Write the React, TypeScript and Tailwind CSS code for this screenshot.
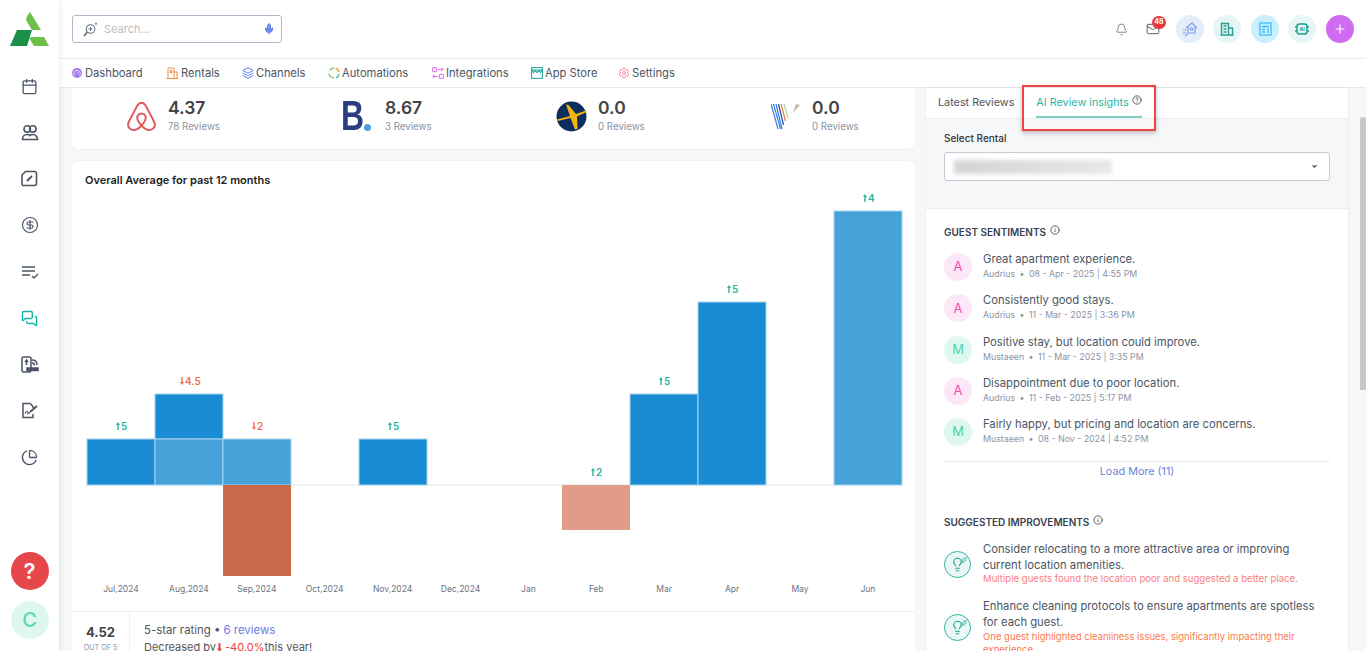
import {
  Bell,
  Calendar,
  CircleDollarSign,
  Info,
  Layers,
  Lightbulb,
  Mail,
  MessagesSquare,
  Mic,
  PieChart,
  Plus,
  Settings,
  CircleHelp,
  ChevronDown,
  Gauge,
  Sparkles,
} from "lucide-react";
import { FaAirbnb } from "react-icons/fa";

const ratings = [
  { score: "4.37", label: "78 Reviews", logo: "airbnb" },
  { score: "8.67", label: "3 Reviews", logo: "booking" },
  { score: "0.0", label: "0 Reviews", logo: "expedia" },
  { score: "0.0", label: "0 Reviews", logo: "vrbo" },
];

const sentiments = [
  { initial: "A", title: "Great apartment experience.", who: "Audrius", when: "08 - Apr - 2025 | 4:55 PM" },
  { initial: "A", title: "Consistently good stays.", who: "Audrius", when: "11 - Mar - 2025 | 3:36 PM" },
  { initial: "M", title: "Positive stay, but location could improve.", who: "Mustaeen", when: "11 - Mar - 2025 | 3:35 PM" },
  { initial: "A", title: "Disappointment due to poor location.", who: "Audrius", when: "11 - Feb - 2025 | 5:17 PM" },
  { initial: "M", title: "Fairly happy, but pricing and location are concerns.", who: "Mustaeen", when: "08 - Nov - 2024 | 4:52 PM" },
];

const months = ["Jul,2024", "Aug,2024", "Sep,2024", "Oct,2024", "Nov,2024", "Dec,2024", "Jan", "Feb", "Mar", "Apr", "May", "Jun"];

// bar coordinates are relative to the chart svg (card left = 72, svg top = 190)
const bars = [
  { x: 15, y: 249, h: 46, fill: "#198cd3" },
  { x: 83, y: 204, h: 45, fill: "#198cd3" },
  { x: 83, y: 249, h: 46, fill: "#46a3d9" },
  { x: 151, y: 249, h: 46, fill: "#46a3d9" },
  { x: 151, y: 295, h: 91, fill: "#c96a4b" },
  { x: 287, y: 249, h: 46, fill: "#198cd3" },
  { x: 490, y: 295, h: 45, fill: "#e19c87" },
  { x: 558, y: 204, h: 91, fill: "#198cd3" },
  { x: 626, y: 112, h: 183, fill: "#198cd3" },
  { x: 762, y: 21, h: 274, fill: "#46a3d9" },
];

const barLabels = [
  { x: 49, y: 240, text: "5", up: true },
  { x: 117, y: 195, text: "4.5", up: false },
  { x: 185, y: 240, text: "2", up: false },
  { x: 321, y: 240, text: "5", up: true },
  { x: 524, y: 286, text: "2", up: true },
  { x: 592, y: 195, text: "5", up: true },
  { x: 660, y: 103, text: "5", up: true },
  { x: 796, y: 12, text: "4", up: true },
];

const Logo = () => (
  <svg width="40" height="36" viewBox="0 0 40 36">
    <path d="M17 4 L20 0 L31 18 L22 18 L16 8 Z" fill="#6cc04a" />
    <path d="M0 34 L7 18 L22 18 L17 34 Z" fill="#1a8f48" />
    <path d="M19 26 L22 25 L34 25 L39 34 L24 34 Z" fill="#6cc04a" />
  </svg>
);

const SearchAiIcon = () => (
  <svg width="15" height="15" viewBox="0 0 15 15" fill="none" stroke="#6b7280" strokeWidth="1.100">
    <circle cx="7.500" cy="7" r="4.300" />
    <path d="M7.500 5v4M5.500 7h4" />
    <path d="M4.300 10.200L1 14" strokeWidth="1.800" />
    <path d="M13 0.500v2.500M11.800 1.700h2.400" strokeWidth="0.800" />
  </svg>
);

const PeopleIcon = () => (
  <svg width="18" height="18" viewBox="0 0 18 18" fill="none" stroke="#4b5563" strokeWidth="1.600">
    <circle cx="6.200" cy="5" r="3.200" />
    <circle cx="11.800" cy="5" r="3.200" />
    <path d="M1.500 15.500c0-3 2-5 4.500-5s3 1 3 1 .8-1 3-1 4.500 2 4.500 5z" />
  </svg>
);

const NoteIcon = () => (
  <svg width="17" height="17" viewBox="0 0 17 17" fill="none" stroke="#4b5563" strokeWidth="1.600">
    <path d="M4.500 1.500h9a2 2 0 0 1 2 2v10a2 2 0 0 1-2 2h-11a1.500 1.500 0 0 1-1.500-1.500V5z" />
    <path d="M6 11l5-5" strokeWidth="2" />
  </svg>
);

const TasksIcon = () => (
  <svg width="18" height="14" viewBox="0 0 18 14" fill="none" stroke="#4b5563" strokeWidth="1.600">
    <path d="M1 2h13M1 6h13M1 10h8" />
    <path d="M11 11l2 2 4-4" strokeWidth="1.300" />
  </svg>
);

const DeviceIcon = () => (
  <svg width="18" height="17" viewBox="0 0 18 17" fill="none" stroke="#4b5563" strokeWidth="1.500">
    <rect x="1" y="1" width="9" height="15" rx="1.500" />
    <path d="M5.500 4v5M4 6l1.500-2L7 6" />
    <path d="M6 12h11v2.500H6z" fill="#4b5563" />
    <path d="M11 4c3 0 5 2 5 5M11 7c1.500 0 2.500 1 2.500 2.500" />
  </svg>
);

const SignIcon = () => (
  <svg width="18" height="17" viewBox="0 0 18 17" fill="none" stroke="#4b5563" strokeWidth="1.500">
    <path d="M12 12v3.500H2V1.500h7l3 3v1.500" />
    <path d="M4 11.500c1.500-3 2.500-3 3 0 1-1 1.500-1 2 0" strokeWidth="1.200" />
    <path d="M9 10l7-6" strokeWidth="2" />
  </svg>
);

const RentalsIcon = () => (
  <svg width="13" height="12" viewBox="0 0 13 12" fill="none" stroke="#f08a4b" strokeWidth="1">
    <path d="M2 11V1h6v10M8 5h3v6M0.500 11.500h12" />
    <path d="M4 3.500h2v2H4z" />
  </svg>
);

const AutomationIcon = () => (
  <svg width="12" height="12" viewBox="0 0 12 12" fill="none" strokeWidth="1.500">
    <path d="M2 3.500A5 5 0 0 1 6 1" stroke="#7cc36a" />
    <path d="M7.500 1.200A5 5 0 0 1 11 5" stroke="#e5a84b" />
    <path d="M11 7a5 5 0 0 1-3 3.800" stroke="#59b8a5" />
    <path d="M6 11a5 5 0 0 1-5-4.500" stroke="#8fc96d" />
  </svg>
);

const IntegrationIcon = () => (
  <svg width="12" height="12" viewBox="0 0 12 12" fill="none" stroke="#e879f9" strokeWidth="1.100">
    <rect x="0.600" y="0.600" width="4" height="4" rx="1" />
    <rect x="7.400" y="7.400" width="4" height="4" rx="1" />
    <path d="M6 2.500h5M9.500 1l1.500 1.500L9.500 4M6 9.500H1M2.500 8L1 9.500 2.500 11" />
  </svg>
);

const StoreIcon = () => (
  <svg width="12" height="12" viewBox="0 0 12 12" fill="none" stroke="#2aa9a0" strokeWidth="1.100">
    <rect x="0.600" y="0.600" width="10.800" height="10.800" />
    <path d="M0.600 3h10.800M1 3l1.500 2.500L4 3.500l2 2 2-2 1.500 2L11 3" />
  </svg>
);

const HomeScanIcon = () => (
  <svg width="16" height="16" viewBox="0 0 16 16" fill="none" stroke="#7f9ce8" strokeWidth="1.100">
    <path d="M4 7l6-5 5 5M6 6v6h7V6" />
    <circle cx="9.500" cy="8" r="1.300" />
    <path d="M1 9h3M1 12h3M3 15l3-2" />
  </svg>
);

const BuildingIcon = () => (
  <svg width="14" height="14" viewBox="0 0 14 14" fill="none" stroke="#2a9d8f" strokeWidth="1.400">
    <path d="M1.500 13V1.500h7V13M8.500 6h4V13M0.500 13h13" />
    <path d="M3.500 4h3M3.500 7h3M3.500 10h3" />
  </svg>
);

const CalcIcon = () => (
  <svg width="13" height="14" viewBox="0 0 13 14" fill="none" stroke="#38bdf8" strokeWidth="1.300">
    <rect x="1" y="1" width="11" height="12" />
    <path d="M3 4.500h7M3 7.500h3M3 10h3M8 7.500h2M8 10h2" />
  </svg>
);

const ChipIcon = () => (
  <svg width="16" height="14" viewBox="0 0 16 14" fill="none" stroke="#14a085" strokeWidth="1.400">
    <rect x="3" y="2" width="10" height="10" rx="2.500" />
    <path d="M1 5h2M1 9h2M13 5h2M13 9h2" />
    <text x="8" y="9" textAnchor="middle" fontSize="5" fill="#14a085" stroke="none" fontFamily="Inter, sans-serif" fontWeight="700">
      AI
    </text>
  </svg>
);

const ExpediaLogo = () => (
  <svg width="31" height="31" viewBox="0 0 31 31">
    <circle cx="15.500" cy="15.500" r="15" fill="#0e2f5e" />
    <path d="M1 18.500 L14 15 L10 3.500 L12.500 4 L20 13 L30 9.500 L30.500 11 L21 15.500 L21.500 28 L19 28.500 L14.500 17 L1.500 20 Z" fill="#f5b50f" />
  </svg>
);

const VrboLogo = () => (
  <svg width="30" height="27" viewBox="0 0 30 27" fill="none" strokeWidth="1.200">
    <path d="M0 1l7 25M2.500 1l7 25M5 1l6 25" stroke="#3b7fdc" />
    <path d="M7.500 1l5 21" stroke="#2450a8" />
    <path d="M10 1l4.500 17" stroke="#ec7a45" />
    <path d="M13 1l4 14" stroke="#a9d6a5" />
    <path d="M22 10l3-9 4 1z" fill="#c9b7a5" stroke="none" />
  </svg>
);

const BookingLogo = () => (
  <span className="flex h-[32px] items-end">
    <span className="block w-[23px] origin-left scale-x-[0.76] font-['Liberation_Sans',sans-serif] text-[42px] font-bold leading-[32px] text-[#2a3d80]">B</span>
    <span className="mb-[1px] size-[7px] rounded-full bg-[#4a9fe0]" />
  </span>
);

const RatingLogo = ({ name }: { name: string }) => {
  if (name === "airbnb") return <FaAirbnb preserveAspectRatio="none" className="h-[33px] w-[31px] text-[#e2575c]" />;
  if (name === "booking") return <BookingLogo />;
  if (name === "expedia") return <ExpediaLogo />;
  return <VrboLogo />;
};

const sideIcons = [
  <Calendar key="a" className="size-[17px] text-gray-600" strokeWidth={1.8} />,
  <PeopleIcon key="b" />,
  <NoteIcon key="c" />,
  <CircleDollarSign key="d" className="size-[18px] text-gray-600" strokeWidth={1.6} />,
  <TasksIcon key="e" />,
  <MessagesSquare key="f" className="size-[17px] text-[#14b8a6]" strokeWidth={2} />,
  <DeviceIcon key="g" />,
  <SignIcon key="h" />,
  <PieChart key="i" className="size-[17px] text-gray-600" strokeWidth={1.8} />,
];

const navItems = [
  { label: "Dashboard", w: "w-[94px]", icon: <span className="mr-[1px] flex size-[10px] items-center justify-center rounded-full bg-[#a27bf0]"><Gauge className="size-[8px] text-white" /></span> },
  { label: "Rentals", w: "w-[76px]", icon: <RentalsIcon /> },
  { label: "Channels", w: "w-[86px]", icon: <Layers className="size-[12px] text-[#5b7ff0]" /> },
  { label: "Automations", w: "w-[104px]", icon: <AutomationIcon /> },
  { label: "Integrations", w: "w-[99px]", icon: <IntegrationIcon /> },
  { label: "App Store", w: "w-[87px]", icon: <StoreIcon /> },
  { label: "Settings", w: "w-[70px]", icon: <Settings className="size-[12px] text-[#f58aa0]" /> },
];

const SuggestionIcon = ({ className = "" }: { className?: string }) => (
  <span className={`relative flex size-[27px] shrink-0 items-center justify-center rounded-full border-[1.5px] border-[#2fb5a0] bg-[#e9f8f6] ${className}`}>
    <Lightbulb className="size-[15px] text-[#22a191]" strokeWidth={1.8} />
    <Sparkles className="absolute right-[3px] top-[5px] size-[6px] text-[#22a191]" />
  </span>
);

const DownArrow = () => (
  <svg width="5" height="9" viewBox="0 0 5 9" className="mx-[1px] inline-block align-[-1px]">
    <path d="M1.500 0h2v5.500H5L2.500 9 0 5.500h1.500z" fill="#ef4444" />
  </svg>
);

export default function App() {
  return (
    <div className="flex h-[651px] w-[1366px] overflow-hidden bg-[#f6f7f9] font-['Inter',sans-serif] text-[#4b5563]">
      <aside className="z-10 flex w-[59px] shrink-0 flex-col items-center bg-white shadow-[1px_0_6px_rgba(0,0,0,0.08)]">
        <div className="pt-[12px]">
          <Logo />
        </div>
        <div className="mt-[15px] flex flex-col">
          {sideIcons.map((icon, i) => (
            <div key={i} className="flex h-[46.400px] items-center justify-center">
              {icon}
            </div>
          ))}
        </div>
        <div className="mt-auto flex flex-col gap-[11px] pb-[12px]">
          <div className="flex size-[38px] items-center justify-center rounded-full bg-[#e5474b] text-[22px] font-semibold text-white">?</div>
          <div className="flex size-[38px] items-center justify-center rounded-full bg-[#dff8ef] text-[20px] font-medium text-[#5dd9b0]">C</div>
        </div>
      </aside>

      <div className="flex min-w-0 flex-1 flex-col">
        <header className="flex h-[59px] shrink-0 items-center justify-between border-b border-[#e8e9ec] bg-white pl-[13px] pr-[12px]">
          <div className="flex h-[28px] w-[210px] items-center rounded-[3px] border border-[#b4b7cc] pl-[10px] pr-[6px]">
            <SearchAiIcon />
            <span className="ml-[6px] text-[11px] text-[#bdbdbd]">Search...</span>
            <Mic className="ml-auto size-[12px] fill-[#7a95e8] text-[#5b7ff0]" />
          </div>
          <div className="flex items-center">
            <Bell className="size-[13px] text-gray-500" strokeWidth={1.6} />
            <div className="relative ml-[18px]">
              <Mail className="size-[14px] text-gray-600" strokeWidth={1.6} />
              <span className="absolute -right-[6px] -top-[6px] flex h-[13px] w-[14px] items-center justify-center rounded-full bg-[#e5393f] text-[7px] font-bold text-white">48</span>
            </div>
            <span className="ml-[16px] flex size-[28px] items-center justify-center rounded-full bg-[#e3eefa]"><HomeScanIcon /></span>
            <span className="ml-[9px] flex size-[28px] items-center justify-center rounded-full bg-[#e6f6f6]"><BuildingIcon /></span>
            <span className="ml-[10px] flex size-[28px] items-center justify-center rounded-full bg-[#c9effc]"><CalcIcon /></span>
            <span className="ml-[9px] flex size-[28px] items-center justify-center rounded-full bg-[#e6f6f6]"><ChipIcon /></span>
            <span className="ml-[10px] flex size-[28px] items-center justify-center rounded-full bg-[#cf6cf2]"><Plus className="size-[14px] text-white" /></span>
          </div>
        </header>

        <nav className="flex h-[29px] shrink-0 items-center border-b border-[#e8e9ec] bg-white pl-[13px] text-[11.200px] text-[#4b5563]">
          {navItems.map((item) => (
            <div key={item.label} className={`flex items-center gap-[2px] ${item.w}`}>
              {item.icon}
              <span>{item.label}</span>
            </div>
          ))}
        </nav>

        <div className="flex min-h-0 flex-1">
          <main className="ml-[13px] flex w-[843px] shrink-0 flex-col overflow-hidden">
            <section className="grid h-[61px] shrink-0 grid-cols-[215px_215px_215px_198px] items-center rounded-b-md bg-white pb-[5px] pl-[54px] shadow-[0_0_2px_rgba(0,0,0,0.08)]">
              {ratings.map((r, i) => (
                <div key={i} className="flex items-center">
                  <div className={`flex items-center ${r.logo === "booking" ? "w-[44px]" : r.logo === "vrbo" ? "w-[41px]" : "w-[42px]"}`}>
                    <RatingLogo name={r.logo} />
                  </div>
                  <div>
                    <div className="text-[17.500px] font-semibold leading-[22px] text-[#444]">{r.score}</div>
                    <div className="text-[9.700px] leading-[16px] text-[#8b92a5]">{r.label}</div>
                  </div>
                </div>
              ))}
            </section>

            <section className="mt-[12px] flex-1 rounded-t-md bg-white shadow-[0_0_2px_rgba(0,0,0,0.08)]">
              <h2 className="pl-[13px] pt-[11px] text-[11px] font-semibold leading-[16px] text-[#222]">Overall Average for past 12 months</h2>
              <svg width="843" height="410" className="mt-[2px] block">
                <line x1="15" x2="830" y1="295" y2="295" stroke="#e3e5e8" />
                {bars.map((b, i) => (
                  <rect key={i} x={b.x} y={b.y} width="68" height={b.h} fill={b.fill} stroke="#a7d3ef" strokeWidth={b.fill === "#c96a4b" || b.fill === "#e19c87" ? 0 : 1} />
                ))}
                {barLabels.map((l, i) => {
                  const ax = l.x - (l.text.length > 1 ? 9 : 5);
                  const color = l.up ? "#26b5a0" : "#ee6c4d";
                  return (
                    <g key={i}>
                      <path
                        d={l.up ? `M${ax + 2} ${l.y - 8}l2 3h-1.300v5h-1.400v-5h-1.300z` : `M${ax + 2} ${l.y}l2-3h-1.300v-5h-1.400v5h-1.300z`}
                        fill={color}
                      />
                      <text x={ax + 5} y={l.y} fontSize="10" fontWeight="600" fontFamily="Inter, sans-serif" fill={color}>
                        {l.text}
                      </text>
                    </g>
                  );
                })}
                {months.map((m, i) => (
                  <text key={m} x={49 + i * 67.900} y="402" textAnchor="middle" fontSize="8.500" fontFamily="Inter, sans-serif" fill="#6b7280">
                    {m}
                  </text>
                ))}
              </svg>
              <div className="mt-[11px] flex border-t border-[#eceef1]">
                <div className="w-[58px] shrink-0 border-r border-[#eceef1] pt-[12px] text-center">
                  <div className="text-[13px] font-bold leading-[16px] text-[#444]">4.52</div>
                  <div className="mt-[2px] text-[7.200px] leading-[12px] text-[#8b92a5]">OUT OF 5</div>
                </div>
                <div className="pl-[14px] pt-[10px] text-[11.400px] leading-[17px] text-[#555]">
                  <div>
                    5-star rating • <span className="text-[#6a7de0]">6 reviews</span>
                  </div>
                  <div className="text-[11px]">
                    Decreased by
                    <DownArrow />
                    <span className="ml-[2px] text-[#ef4444]">-40.0%</span>this year!
                  </div>
                </div>
              </div>
            </section>
          </main>

          <aside className="ml-[11px] flex w-[422px] shrink-0 flex-col overflow-hidden bg-white shadow-[0_0_2px_rgba(0,0,0,0.08)]">
            <div className="flex h-[30px] shrink-0 pl-[12px] text-[10.800px]">
              <span className="pt-[7px] text-[#555]">Latest Reviews</span>
              <div className="ml-[22px] flex w-[106px] items-start gap-[3px] border-b-2 border-[#7fcfc5] pt-[7px] text-[#2cb5a8]">
                <span>AI Review insights</span>
                <CircleHelp className="size-[10px] text-[#444]" />
              </div>
            </div>
            <div className="h-[91px] shrink-0 border-y border-[#eceef1] bg-[#f6f7f9] px-[18px] pt-[12px]">
              <div className="text-[10px] font-medium leading-[14px] text-[#333]">Select Rental</div>
              <div className="mt-[7px] flex h-[29px] items-center justify-between rounded-[3px] border border-[#c5c9d6] bg-white pl-[9px] pr-[10px]">
                <span className="h-[14px] w-[158px] bg-gradient-to-r from-[#d4d4d4] to-[#e8e8e8] blur-[2px]" />
                <ChevronDown className="size-[9px] fill-[#555] text-[#555]" />
              </div>
            </div>

            <div className="px-[18px] pt-[16px]">
              <h3 className="flex items-start gap-[4px] text-[10px] font-semibold uppercase leading-[14px] text-[#374151]">
                Guest Sentiments <Info className="size-[10px] text-[#444]" />
              </h3>
              <ul className="mt-[13px] flex flex-col">
                {sentiments.map((s, i) => (
                  <li key={i} className="flex h-[41.300px] items-start">
                    <span className={`mt-[1px] flex size-[28px] shrink-0 items-center justify-center rounded-full text-[13px] ${s.initial === "A" ? "bg-[#fde7f6] text-[#ec4fb8]" : "bg-[#dff8ef] text-[#55cfa5]"}`}>{s.initial}</span>
                    <div className="ml-[11px]">
                      <div className="text-[11.250px] leading-[15px] text-[#4b5563]">{s.title}</div>
                      <div className="text-[8.800px] leading-[14px] text-[#8b92a5]">
                        {s.who} <span className="mx-[2px]">•</span> {s.when}
                      </div>
                    </div>
                  </li>
                ))}
              </ul>
              <div className="mt-[3px] w-[386px] border-t border-[#e8e9ec] pt-[2px] text-center text-[10.800px] leading-[15px] text-[#6a83e0]">Load More (11)</div>

              <h3 className="mt-[36px] flex items-start gap-[4px] text-[10px] font-semibold uppercase leading-[14px] text-[#374151]">
                Suggested Improvements <Info className="size-[10px] text-[#444]" />
              </h3>
              <div className="mt-[12px] flex items-center gap-[12px]">
                <SuggestionIcon className="mt-[2px]" />
                <div className="w-[339px] text-[11.250px] leading-[16px] text-[#4b5563]">
                  Consider relocating to a more attractive area or improving current location amenities.
                  <div className="text-[9.600px] leading-[12px] text-[#f98080]">Multiple guests found the location poor and suggested a better place.</div>
                </div>
              </div>
              <div className="mt-[13px] flex items-center gap-[12px]">
                <SuggestionIcon />
                <div className="w-[339px] text-[11.250px] leading-[16px] text-[#4b5563]">
                  Enhance cleaning protocols to ensure apartments are spotless for each guest.
                  <div className="text-[9.500px] leading-[13px] text-[#fb7a50]">One guest highlighted cleanliness issues, significantly impacting their experience.</div>
                </div>
              </div>
            </div>
          </aside>

          <div className="flex flex-1 justify-end pt-[29px]">
            <div className="h-[273px] w-[6px] rounded-t-[2px] bg-[#c8c8c8]" />
          </div>
        </div>
      </div>

      <div className="absolute left-[1022px] top-[85px] h-[46px] w-[134px] border-2 border-[#f04444] shadow-[0_2px_5px_rgba(0,0,0,0.25)]" />
    </div>
  );
}
